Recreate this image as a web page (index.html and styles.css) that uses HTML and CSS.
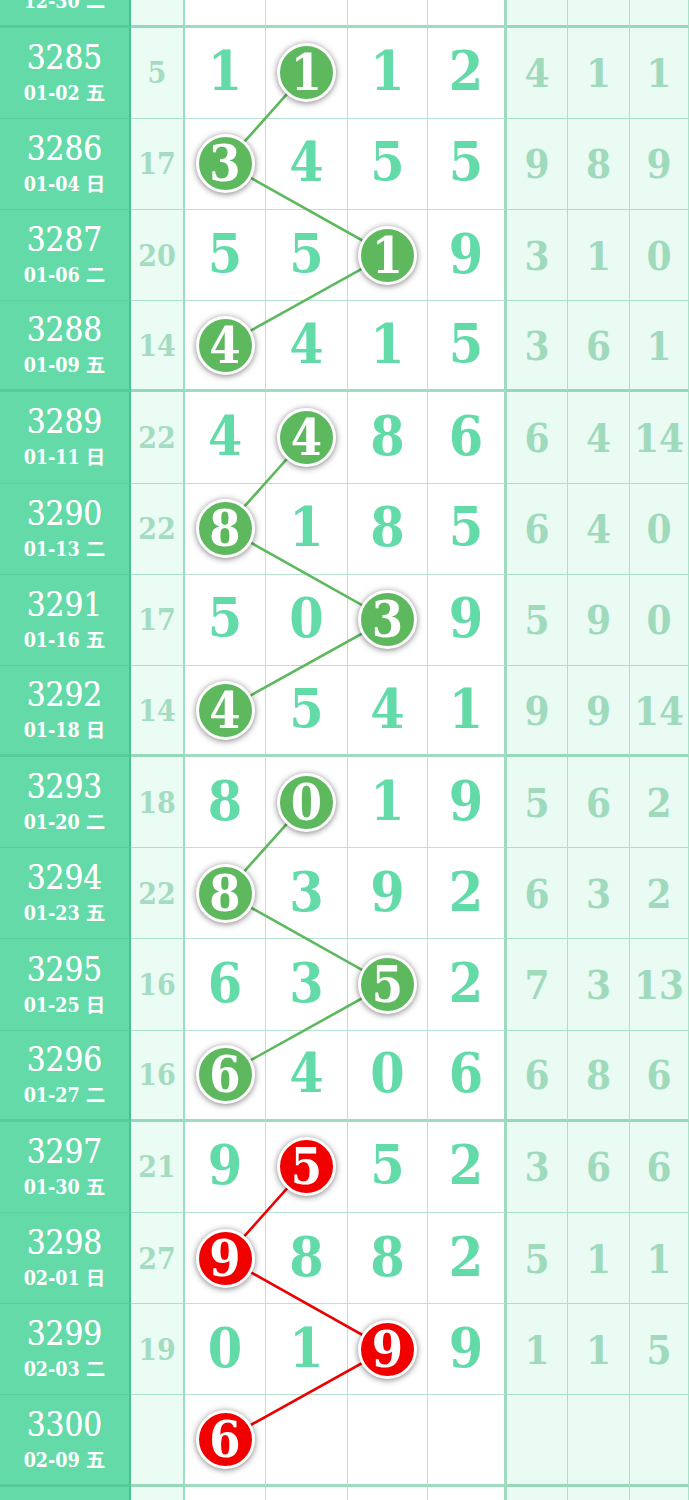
FILE: index.html
```html
<!DOCTYPE html>
<html lang="zh">
<head>
<meta charset="utf-8">
<title>走势图</title>
<link rel="stylesheet" href="styles.css">
</head>
<body>
<div class="board">
  <div class="row end">
    <div class="c-id"><span class="no">3284</span><span class="date">12-30 二</span></div>
    <div class="c-sum">15</div>
    <div class="c-d">3</div><div class="c-d">0</div><div class="c-d">7</div><div class="c-d c-last">3</div>
    <div class="c-r">3</div><div class="c-r">3</div><div class="c-r">3</div>
  </div>
  <div class="row">
    <div class="c-id"><span class="no">3285</span><span class="date">01-02 五</span></div>
    <div class="c-sum">5</div>
    <div class="c-d">1</div><div class="c-d"><span class="ball">1</span></div><div class="c-d">1</div><div class="c-d c-last">2</div>
    <div class="c-r">4</div><div class="c-r">1</div><div class="c-r">1</div>
  </div>
  <div class="row">
    <div class="c-id"><span class="no">3286</span><span class="date">01-04 日</span></div>
    <div class="c-sum">17</div>
    <div class="c-d"><span class="ball">3</span></div><div class="c-d">4</div><div class="c-d">5</div><div class="c-d c-last">5</div>
    <div class="c-r">9</div><div class="c-r">8</div><div class="c-r">9</div>
  </div>
  <div class="row">
    <div class="c-id"><span class="no">3287</span><span class="date">01-06 二</span></div>
    <div class="c-sum">20</div>
    <div class="c-d">5</div><div class="c-d">5</div><div class="c-d"><span class="ball">1</span></div><div class="c-d c-last">9</div>
    <div class="c-r">3</div><div class="c-r">1</div><div class="c-r">0</div>
  </div>
  <div class="row end">
    <div class="c-id"><span class="no">3288</span><span class="date">01-09 五</span></div>
    <div class="c-sum">14</div>
    <div class="c-d"><span class="ball">4</span></div><div class="c-d">4</div><div class="c-d">1</div><div class="c-d c-last">5</div>
    <div class="c-r">3</div><div class="c-r">6</div><div class="c-r">1</div>
  </div>
  <div class="row">
    <div class="c-id"><span class="no">3289</span><span class="date">01-11 日</span></div>
    <div class="c-sum">22</div>
    <div class="c-d">4</div><div class="c-d"><span class="ball">4</span></div><div class="c-d">8</div><div class="c-d c-last">6</div>
    <div class="c-r">6</div><div class="c-r">4</div><div class="c-r">14</div>
  </div>
  <div class="row">
    <div class="c-id"><span class="no">3290</span><span class="date">01-13 二</span></div>
    <div class="c-sum">22</div>
    <div class="c-d"><span class="ball">8</span></div><div class="c-d">1</div><div class="c-d">8</div><div class="c-d c-last">5</div>
    <div class="c-r">6</div><div class="c-r">4</div><div class="c-r">0</div>
  </div>
  <div class="row">
    <div class="c-id"><span class="no">3291</span><span class="date">01-16 五</span></div>
    <div class="c-sum">17</div>
    <div class="c-d">5</div><div class="c-d">0</div><div class="c-d"><span class="ball">3</span></div><div class="c-d c-last">9</div>
    <div class="c-r">5</div><div class="c-r">9</div><div class="c-r">0</div>
  </div>
  <div class="row end">
    <div class="c-id"><span class="no">3292</span><span class="date">01-18 日</span></div>
    <div class="c-sum">14</div>
    <div class="c-d"><span class="ball">4</span></div><div class="c-d">5</div><div class="c-d">4</div><div class="c-d c-last">1</div>
    <div class="c-r">9</div><div class="c-r">9</div><div class="c-r">14</div>
  </div>
  <div class="row">
    <div class="c-id"><span class="no">3293</span><span class="date">01-20 二</span></div>
    <div class="c-sum">18</div>
    <div class="c-d">8</div><div class="c-d"><span class="ball">0</span></div><div class="c-d">1</div><div class="c-d c-last">9</div>
    <div class="c-r">5</div><div class="c-r">6</div><div class="c-r">2</div>
  </div>
  <div class="row">
    <div class="c-id"><span class="no">3294</span><span class="date">01-23 五</span></div>
    <div class="c-sum">22</div>
    <div class="c-d"><span class="ball">8</span></div><div class="c-d">3</div><div class="c-d">9</div><div class="c-d c-last">2</div>
    <div class="c-r">6</div><div class="c-r">3</div><div class="c-r">2</div>
  </div>
  <div class="row">
    <div class="c-id"><span class="no">3295</span><span class="date">01-25 日</span></div>
    <div class="c-sum">16</div>
    <div class="c-d">6</div><div class="c-d">3</div><div class="c-d"><span class="ball">5</span></div><div class="c-d c-last">2</div>
    <div class="c-r">7</div><div class="c-r">3</div><div class="c-r">13</div>
  </div>
  <div class="row end">
    <div class="c-id"><span class="no">3296</span><span class="date">01-27 二</span></div>
    <div class="c-sum">16</div>
    <div class="c-d"><span class="ball">6</span></div><div class="c-d">4</div><div class="c-d">0</div><div class="c-d c-last">6</div>
    <div class="c-r">6</div><div class="c-r">8</div><div class="c-r">6</div>
  </div>
  <div class="row">
    <div class="c-id"><span class="no">3297</span><span class="date">01-30 五</span></div>
    <div class="c-sum">21</div>
    <div class="c-d">9</div><div class="c-d"><span class="ball red">5</span></div><div class="c-d">5</div><div class="c-d c-last">2</div>
    <div class="c-r">3</div><div class="c-r">6</div><div class="c-r">6</div>
  </div>
  <div class="row">
    <div class="c-id"><span class="no">3298</span><span class="date">02-01 日</span></div>
    <div class="c-sum">27</div>
    <div class="c-d"><span class="ball red">9</span></div><div class="c-d">8</div><div class="c-d">8</div><div class="c-d c-last">2</div>
    <div class="c-r">5</div><div class="c-r">1</div><div class="c-r">1</div>
  </div>
  <div class="row">
    <div class="c-id"><span class="no">3299</span><span class="date">02-03 二</span></div>
    <div class="c-sum">19</div>
    <div class="c-d">0</div><div class="c-d">1</div><div class="c-d"><span class="ball red">9</span></div><div class="c-d c-last">9</div>
    <div class="c-r">1</div><div class="c-r">1</div><div class="c-r">5</div>
  </div>
  <div class="row end">
    <div class="c-id"><span class="no">3300</span><span class="date">02-09 五</span></div>
    <div class="c-sum"></div>
    <div class="c-d"><span class="ball red">6</span></div><div class="c-d"></div><div class="c-d"></div><div class="c-d c-last"></div>
    <div class="c-r"></div><div class="c-r"></div><div class="c-r"></div>
  </div>
  <div class="row">
    <div class="c-id"></div>
    <div class="c-sum"></div>
    <div class="c-d"></div><div class="c-d"></div><div class="c-d"></div><div class="c-d c-last"></div>
    <div class="c-r"></div><div class="c-r"></div><div class="c-r"></div>
  </div>

  <svg class="links" width="689" height="1642" viewBox="0 0 689 1642" aria-hidden="true">
    <polyline class="link-green" points="306.5,136.2 225,227.4 387.5,318.6 225,408.9"/>
    <polyline class="link-green" points="306.5,501 225,592.2 387.5,683.4 225,773.7"/>
    <polyline class="link-green" points="306.5,865.8 225,957 387.5,1048.2 225,1138.5"/>
    <polyline class="link-red" points="306.5,1230.6 225,1321.8 387.5,1413 225,1503.3"/>
  </svg>
</div>
</body>
</html>
```

FILE: styles.css
```css
html, body {
  margin: 0;
  padding: 0;
  background: #ffffff;
  overflow: hidden;
}

.board {
  position: relative;
  width: 689px;
  margin-top: -63.6px;
  font-family: "DejaVu Serif Condensed", "DejaVu Serif", "Noto Sans CJK SC", serif;
  font-stretch: condensed;
}

.row {
  display: grid;
  grid-template-columns: 131px 54px 81px 82px 80px 79px 61px 62px 59px;
  height: 91.2px;
}

.row > div {
  box-sizing: border-box;
  border-bottom: 1px solid rgba(80, 190, 140, 0.42);
  border-right: 1px solid rgba(80, 190, 140, 0.42);
  display: flex;
  align-items: center;
  justify-content: center;
}

.row.end > div {
  border-bottom: 3px solid rgba(80, 190, 140, 0.55);
}

.c-id {
  background: #65daa9;
  flex-direction: column;
  gap: 6px;
  color: #ffffff;
  border-right: 2px solid rgba(60, 170, 120, 0.55) !important;
}

.no {
  font-size: 33px;
  line-height: 36px;
  font-weight: 400;
  text-shadow: 0 0 0.6px #ffffff;
}

.date {
  font-size: 19.5px;
  line-height: 24px;
  font-weight: 700;
  font-family: "DejaVu Serif Condensed", "DejaVu Serif", "Noto Sans CJK SC", sans-serif;
}

.c-sum {
  background: #ebfcf4;
  color: #a4dcc2;
  font-size: 30px;
  font-weight: 700;
  border-right: 2px solid rgba(80, 190, 140, 0.5) !important;
}

.c-d {
  background: #ffffff;
  color: #62dba9;
  font-size: 55px;
  font-weight: 700;
  line-height: 1;
  padding-bottom: 4px;
}

.c-d.c-last {
  border-right: 3px solid rgba(80, 190, 140, 0.55) !important;
}

.c-r {
  background: #eafbf3;
  color: #9fdabd;
  font-size: 40px;
  font-weight: 700;
}

.ball {
  position: relative;
  z-index: 2;
  box-sizing: border-box;
  width: 59px;
  height: 59px;
  border-radius: 50%;
  border: 3px solid #ffffff;
  background: #5db85e;
  color: #ffffff;
  font-size: 50px;
  font-weight: 700;
  line-height: 53px;
  text-align: center;
  box-shadow: 0 1px 6px rgba(0, 0, 0, 0.5);
  margin-top: 4px;
}

.ball.red {
  background: #f20000;
}

.links {
  position: absolute;
  left: 0;
  top: 0;
  z-index: 1;
  pointer-events: none;
}

.link-green {
  fill: none;
  stroke: #5db85e;
  stroke-width: 2.6;
}

.link-red {
  fill: none;
  stroke: #ee0000;
  stroke-width: 2.6;
}
```
